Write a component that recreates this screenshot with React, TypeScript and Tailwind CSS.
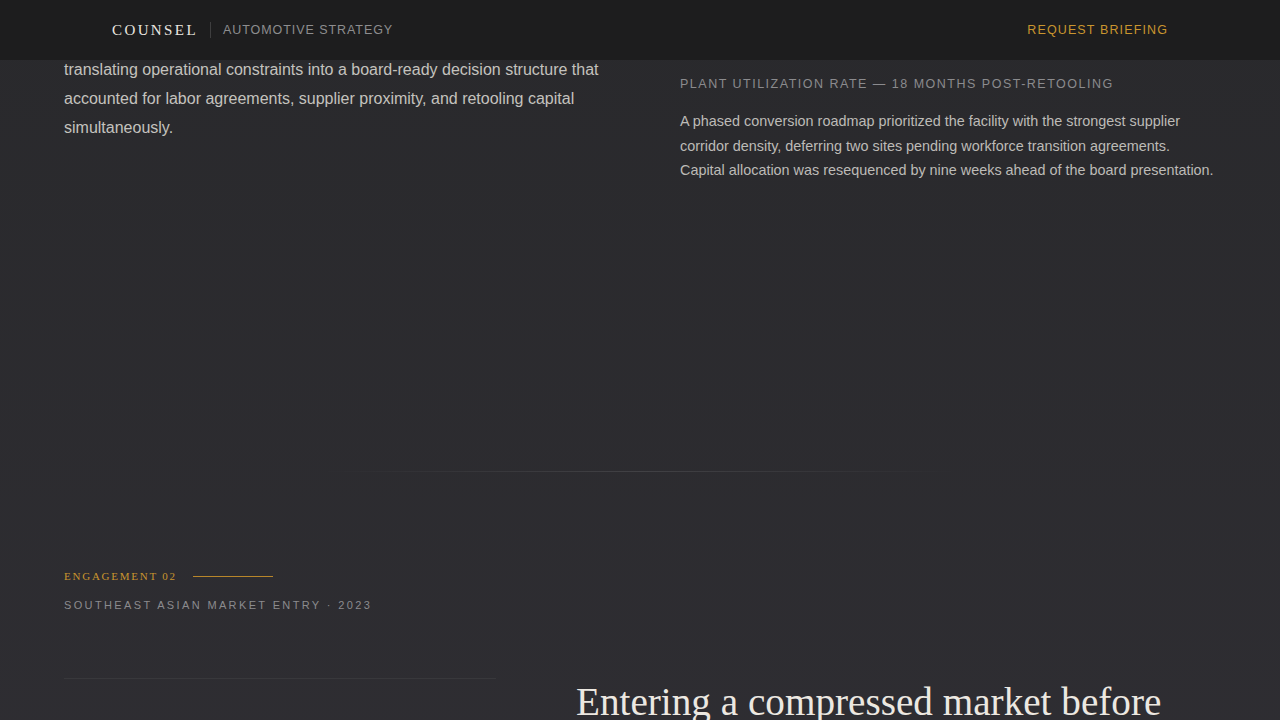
import React from 'react';

const sans = "font-['Liberation_Sans',Arial,sans-serif]";
const serif = "font-['Liberation_Serif','Times_New_Roman',serif]";

const Header: React.FC = () => (
  <header className="fixed inset-x-0 top-0 z-10 h-[60px] bg-[#1d1d1e]">
    <div className="flex h-full items-center justify-between px-28">
      <div className="flex items-center">
        <span className={`${serif} text-[15px] tracking-[0.16em] text-[#ece8e1]`}>COUNSEL</span>
        <span className="mx-3 h-4 w-px bg-white/15" />
        <span className={`${sans} text-[12.5px] tracking-[0.075em] text-[#8d8d8f]`}>AUTOMOTIVE STRATEGY</span>
      </div>
      <a href="#briefing" className={`${sans} text-[12.5px] tracking-[0.09em] text-[#c9952e]`}>
        REQUEST BRIEFING
      </a>
    </div>
  </header>
);

export default function App() {
  return (
    <div className={`${sans} min-h-screen bg-gradient-to-b from-[#29292c] to-[#2f2e33] text-[#c9c7c3]`}>
      <Header />

      {/* Engagement 01 — outcome */}
      <section className="px-16 pt-[55px] pb-[288px]">
        <div className="grid grid-cols-[552px_1fr] gap-16">
          <p className="text-[16px] leading-[29px] text-[#c4c2be]">
            translating operational constraints into a board-ready decision structure that
            accounted for labor agreements, supplier proximity, and retooling capital
            simultaneously.
          </p>
          <div className="pt-[19px]">
            <div className="text-[12.5px] leading-5 tracking-[0.12em] text-[#8b8b8e]">
              PLANT UTILIZATION RATE — 18 MONTHS POST-RETOOLING
            </div>
            <p className="mt-[15px] text-[14.4px] leading-[24.5px] text-[#bdbbb7]">
              A phased conversion roadmap prioritized the facility with the strongest supplier
              corridor density, deferring two sites pending workforce transition agreements.
              Capital allocation was resequenced by nine weeks ahead of the board presentation.
            </p>
          </div>
        </div>
      </section>

      <div className="mx-auto h-px w-[640px] bg-gradient-to-r from-transparent via-white/10 to-transparent" />

      {/* Engagement 02 */}
      <section className="px-16 pt-24 pb-24">
        <div className="flex items-start">
          <span className={`${serif} text-[11px] leading-4 tracking-[0.16em] text-[#c9952e]`}>ENGAGEMENT 02</span>
          <span className="ml-4 mt-2 h-px w-20 bg-[#b8862a]" />
        </div>
        <div className="mt-[13px] text-[11px] leading-4 tracking-[0.215em] text-[#8b8b8e]">
          SOUTHEAST ASIAN MARKET ENTRY · 2023
        </div>

        <div className="mt-[65px] grid grid-cols-[432px_1fr] gap-20">
          <div className="border-t border-white/5" />
          <h2 className={`${serif} text-[39.2px] leading-[48px] text-[#ece8e1]`}>
            Entering a compressed market before consolidation closed the window.
          </h2>
        </div>
      </section>
    </div>
  );
}
